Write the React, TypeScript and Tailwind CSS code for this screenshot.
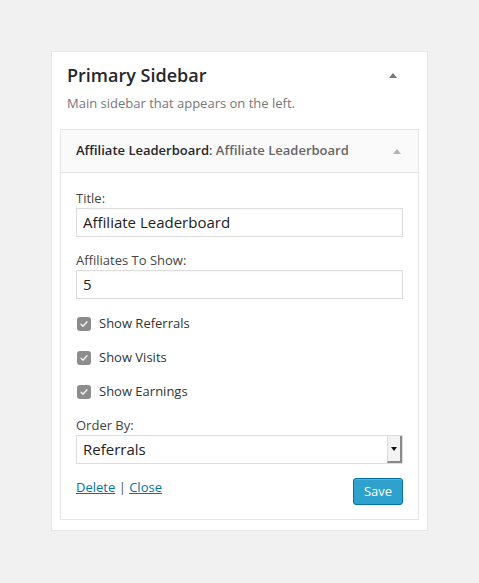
import React from 'react';

const toggles = ["Show Referrals", "Show Visits", "Show Earnings"];

const Caret = ({ className }: { className: string }) => (
  <span className={`block w-0 h-0 border-l-[4px] border-r-[4px] border-b-[5px] border-l-transparent border-r-transparent ${className}`} />
);

const CheckBox = () => (
  <span className="flex items-center justify-center w-[14px] h-[14px] rounded-[3px] bg-[#8c8c8c]">
    <svg width="10" height="10" viewBox="0 0 10 10" fill="none">
      <path d="M2 5.2l2 2.1 4-4.6" stroke="#f4f4f4" strokeWidth="1.3" strokeLinecap="round" strokeLinejoin="round" />
    </svg>
  </span>
);

const App: React.FC = () => {
  return (
    <div className="min-h-[583px] w-[479px] bg-[#f1f1f1] pt-[51px] pl-[51px] font-['Open_Sans',sans-serif]">
      <div className="w-[377px] bg-white border border-[#e5e5e5] px-[8px] pb-[10px]">
        <div className="flex items-center justify-between pl-[7px] pr-[22px] pt-[11px]">
          <h2 className="text-[18px] leading-[24px] font-semibold text-[#23282d]">Primary Sidebar</h2>
          <Caret className="border-b-[#767676]" />
        </div>
        <p className="pl-[7px] mt-[6px] text-[13px] leading-[20px] text-[#777]">
          Main sidebar that appears on the left.
        </p>

        <div className="mt-[16px] border border-[#e5e5e5]">
          <div className="flex items-center justify-between h-[43px] bg-[#fafafa] border-b border-[#e5e5e5] pl-[15px] pr-[17px]">
            <h3 className="text-[13px] font-semibold text-[#23282d]">
              Affiliate Leaderboard<span className="font-normal">:</span>{' '}
              <span className="text-[#666]">Affiliate Leaderboard</span>
            </h3>
            <Caret className="border-b-[#b4b4b4]" />
          </div>

          <div className="px-[15px] pt-[17px] pb-[14px] text-[13px] text-[#444]">
            <label className="block leading-[17px] mb-px">Title:</label>
            <div className="h-[29px] border border-[#ddd] flex items-center px-[6px] text-[15px] text-[#222] shadow-[inset_0_1px_2px_rgba(0,0,0,0.04)]">
              Affiliate Leaderboard
            </div>

            <label className="block leading-[17px] mt-[15px] mb-px">Affiliates To Show:</label>
            <div className="h-[29px] border border-[#ddd] flex items-center px-[6px] text-[15px] text-[#222] shadow-[inset_0_1px_2px_rgba(0,0,0,0.04)]">
              5
            </div>

            <div className="flex flex-col gap-[14px] mt-[15px]">
              {toggles.map((t) => (
                <div key={t} className="flex items-center h-[20px] gap-[8px] pl-px">
                  <CheckBox />
                  <span className="text-[#333]">{t}</span>
                </div>
              ))}
            </div>

            <label className="block leading-[17px] mt-[15px] mb-px">Order By:</label>
            <div className="h-[29px] border border-[#ddd] flex items-stretch text-[15px] text-[#222]">
              <span className="flex-1 flex items-center px-[6px]">Referrals</span>
              <span className="w-[15px] flex items-center justify-center bg-[#f3f3f3] border-l border-[#d8d8d8] border-r-2 border-b-2 border-r-[#8a8a8a] border-b-[#8a8a8a]">
                <span className="block w-0 h-0 border-l-[3px] border-r-[3px] border-t-[4px] border-l-transparent border-r-transparent border-t-[#111]" />
              </span>
            </div>

            <div className="flex items-start justify-between mt-[14px]">
              <div className="leading-[17px] pt-[1px] text-[#555]">
                <a className="text-[#0074a2] underline">Delete</a> | <a className="text-[#0074a2] underline">Close</a>
              </div>
              <button className="h-[27px] w-[50px] rounded-[3px] bg-[#2ea2cc] border border-[#0074a2] text-white text-[13px] shadow-[inset_0_1px_0_rgba(120,200,230,0.5)]">
                Save
              </button>
            </div>
          </div>
        </div>
      </div>
    </div>
  );
};

export default App;
